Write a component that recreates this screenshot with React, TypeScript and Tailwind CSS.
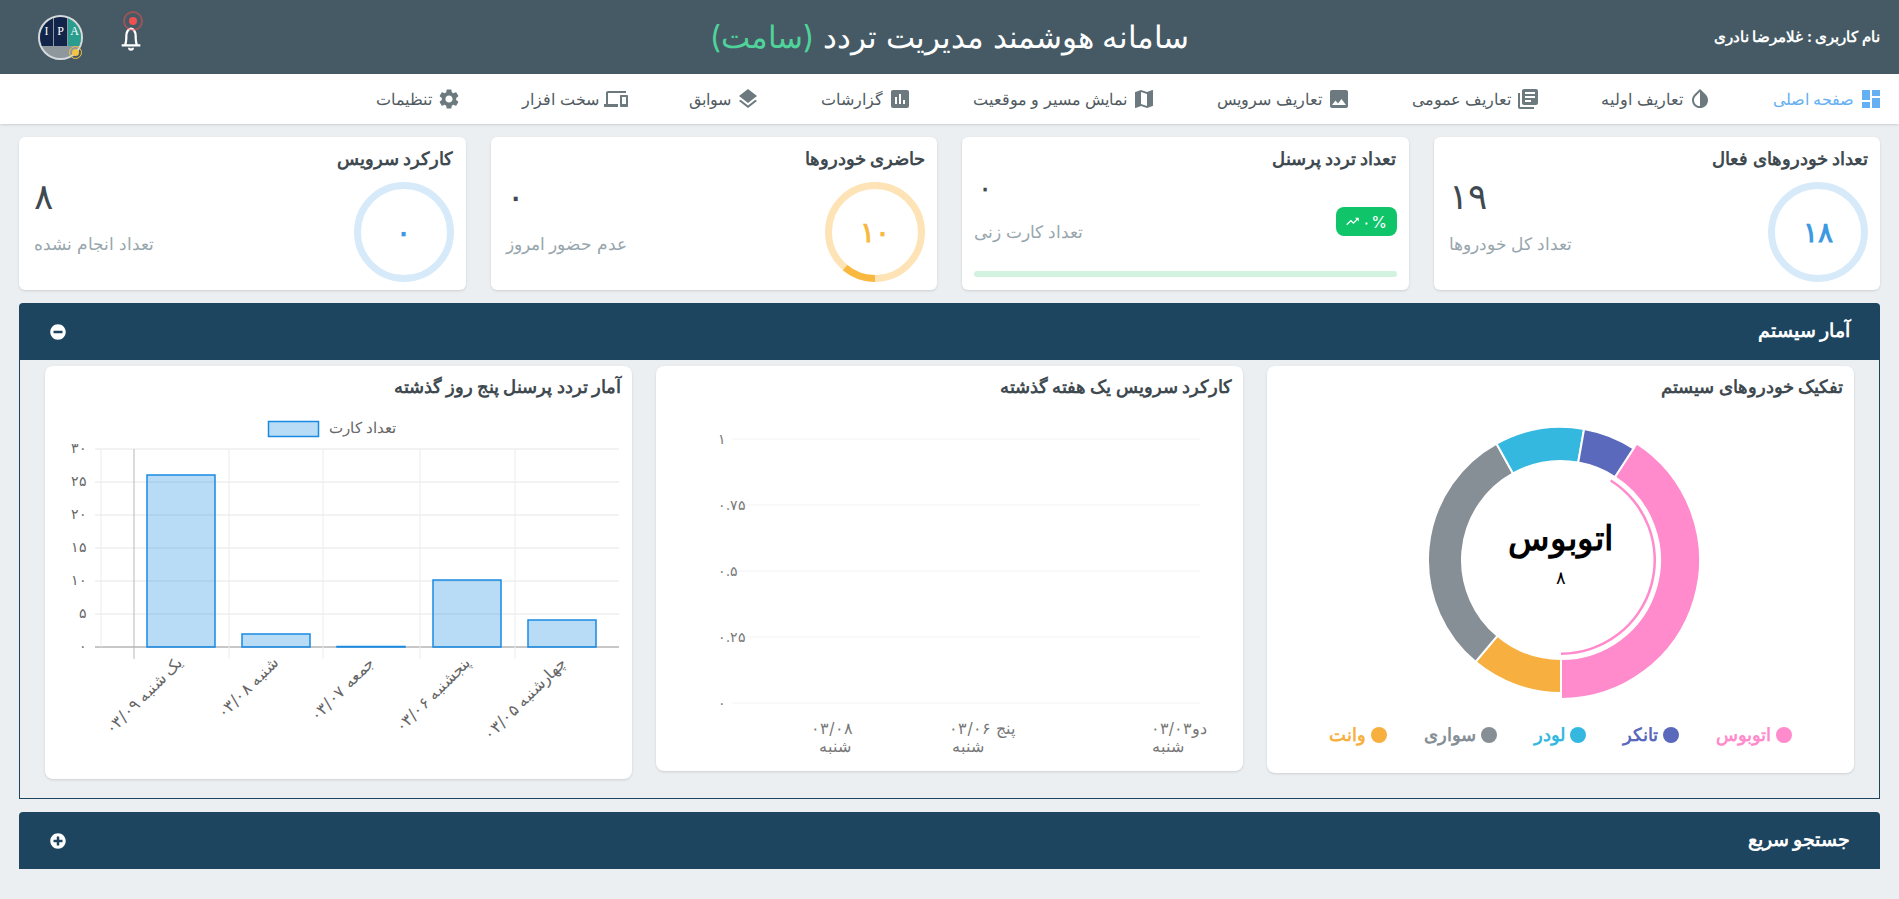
import {
  MdDashboard,
  MdInvertColors,
  MdLibraryBooks,
  MdImage,
  MdMap,
  MdInsertChart,
  MdLayers,
  MdDevices,
  MdSettings,
  MdTrendingUp,
} from 'react-icons/md';
import { FaMinusCircle, FaPlusCircle } from 'react-icons/fa';

const navItems = [
  { label: 'صفحه اصلی', Icon: MdDashboard, active: true },
  { label: 'تعاریف اولیه', Icon: MdInvertColors },
  { label: 'تعاریف عمومی', Icon: MdLibraryBooks },
  { label: 'تعاریف سرویس', Icon: MdImage },
  { label: 'نمایش مسیر و موقعیت', Icon: MdMap },
  { label: 'گزارشات', Icon: MdInsertChart },
  { label: 'سوابق', Icon: MdLayers },
  { label: 'سخت افزار', Icon: MdDevices },
  { label: 'تنظیمات', Icon: MdSettings },
];

function Ring({ value, color, track, arc }: { value: string; color: string; track: string; arc?: boolean }) {
  return (
    <div className="relative w-[100px] h-[100px] shrink-0">
      <svg viewBox="0 0 100 100" className="w-full h-full">
        <circle cx="50" cy="50" r="46.5" fill="none" stroke={track} strokeWidth="7" />
        {arc && <path d="M50 96.5A46.5 46.5 0 0 1 20.1 85.6" fill="none" stroke={color} strokeWidth="7" />}
      </svg>
      <div className="absolute inset-0 flex items-center justify-center text-[28px] font-bold tracking-[2px]" style={{ color }}>
        {value}
      </div>
    </div>
  );
}

function StatCard({ title, ring, value, label }: { title: string; ring: React.ReactNode; value: string; label: string }) {
  return (
    <div className="bg-white rounded-md shadow-sm h-[153px] pt-3 px-3">
      <h3 className="text-[18px] font-bold text-[#3f4a50] leading-[20px]">{title}</h3>
      <div className="flex items-start justify-between mt-[13px]">
        {ring}
        <div className="text-left w-[170px] pl-[3px]">
          <div className="text-[36px] leading-[42px] tracking-[4px] text-[#3f4a50] mt-[-7px]">{value}</div>
          <div className="text-[17px] leading-[20px] text-[#98a6ad] mt-[17px]">{label}</div>
        </div>
      </div>
    </div>
  );
}

function TrafficCard() {
  return (
    <div className="bg-white rounded-md shadow-sm h-[153px] pt-3 px-3">
      <h3 className="text-[18px] font-bold text-[#3f4a50] leading-[20px]">تعداد تردد پرسنل</h3>
      <div className="flex items-start justify-between">
        <div dir="ltr" className="mt-[38px] w-[61px] h-[29px] rounded-lg bg-[#10c469] text-white text-[16px] flex items-center justify-center gap-[2px]">
          <MdTrendingUp className="w-[15px] h-[15px]" />
          <span>۰%</span>
        </div>
        <div className="text-left">
          <div className="text-[30px] leading-[36px] text-[#3f4a50] pl-[3px]">۰</div>
          <div className="text-[17px] leading-[20px] text-[#98a6ad] mt-[17px]">تعداد کارت زنی</div>
        </div>
      </div>
      <div className="h-[6px] rounded bg-[#d1f3e0] mt-[29px]" />
    </div>
  );
}

function SectionHeader({ title, open }: { title: string; open?: boolean }) {
  return (
    <div className="bg-[#1d455f] h-[57px] rounded-t flex items-center justify-between pr-[30px] pl-[31px] text-white">
      <span className="text-[19px] font-bold">{title}</span>
      {open ? <FaMinusCircle className="w-4 h-4" /> : <FaPlusCircle className="w-4 h-4" />}
    </div>
  );
}

const slices = [
  { name: 'اتوبوس', color: '#ff8acc' },
  { name: 'تانکر', color: '#5b69bc' },
  { name: 'لودر', color: '#35b8e0' },
  { name: 'سواری', color: '#868e96' },
  { name: 'وانت', color: '#f7b03f' },
];

function polar(r: number, deg: number) {
  const a = (deg * Math.PI) / 180;
  return [140 + r * Math.sin(a), 140 - r * Math.cos(a)];
}

function arc(r0: number, r1: number, a0: number, a1: number) {
  const [x0, y0] = polar(r1, a0);
  const [x1, y1] = polar(r1, a1);
  const [x2, y2] = polar(r0, a1);
  const [x3, y3] = polar(r0, a0);
  const large = a1 - a0 > 180 ? 1 : 0;
  return `M${x0} ${y0}A${r1} ${r1} 0 ${large} 1 ${x1} ${y1}L${x2} ${y2}A${r0} ${r0} 0 ${large} 0 ${x3} ${y3}Z`;
}

function Donut() {
  return (
    <div className="relative w-[280px] h-[280px] mx-auto">
      <svg viewBox="0 0 280 280" className="w-full h-full">
        <path d={arc(99, 139, 33, 180)} fill="#ff8acc" stroke="#fff" strokeWidth="2" />
        <path d={arc(99, 133, 180, 220)} fill="#f7b03f" stroke="#fff" strokeWidth="2" />
        <path d={arc(99, 133, 220, 331)} fill="#868e96" stroke="#fff" strokeWidth="2" />
        <path d={arc(99, 133, 331, 370)} fill="#35b8e0" stroke="#fff" strokeWidth="2" />
        <path d={arc(99, 133, 10, 33)} fill="#5b69bc" stroke="#fff" strokeWidth="2" />
        <path d={arc(92.5, 95, 32, 180)} fill="#ff8acc" />
      </svg>
      <div className="absolute inset-0 flex flex-col items-center justify-center text-black">
        <span className="text-[34px] font-bold leading-[40px] mt-[-12px]">اتوبوس</span>
        <span className="text-[18px] mt-[6px]">۸</span>
      </div>
    </div>
  );
}

function BarChart() {
  const bars = [
    { x: 147, top: 475 },
    { x: 242, top: 634 },
    { x: 337, top: 646.5 },
    { x: 433, top: 580 },
    { x: 528, top: 620 },
  ];
  const yTicks = ['۰', '۵', '۱۰', '۱۵', '۲۰', '۲۵', '۳۰'];
  const xLabels = ['یک شنبه ۰۳/۰۹', 'شنبه ۰۳/۰۸', 'جمعه ۰۳/۰۷', 'پنجشنبه ۰۳/۰۶', 'چهارشنبه ۰۳/۰۵'];
  const vLines = [101, 134, 229, 323, 420, 515];
  return (
    <svg viewBox="45 410 587 369" className="w-[587px] h-[369px]">
      <rect x="268.5" y="421.5" width="50" height="15" fill="#188ae2" fillOpacity="0.3" stroke="#188ae2" strokeWidth="1.5" />
      <text x="396" y="433" fontSize="15" fill="#666" textAnchor="start">تعداد کارت</text>
      {yTicks.map((t, i) => {
        const y = 647 - i * 33;
        return (
          <g key={t}>
            <line x1="95" x2="619" y1={y} y2={y} stroke={i === 0 ? '#b5b5b5' : '#e6e6e6'} strokeWidth={i === 0 ? 1.5 : 1} />
            <text x="87" y={y + 4} textAnchor="start" fontSize="14" fill="#666">{t}</text>
          </g>
        );
      })}
      {vLines.map((x, i) => (
        <line key={x} x1={x} x2={x} y1="449" y2={i === 0 ? 647 : 659} stroke={i === 1 ? '#b8b8b8' : '#ececec'} />
      ))}
      {bars.map((b) => (
        <rect key={b.x} x={b.x} y={b.top} width="68" height={647 - b.top} fill="#188ae2" fillOpacity="0.3" stroke="#188ae2" strokeWidth="1.5" />
      ))}
      {xLabels.map((l, i) => {
        const x = 183 + i * 96;
        return (
          <text key={l} x={x} y="664" fontSize="16" fill="#666" textAnchor="start" transform={`rotate(-45 ${x} 664)`}>{l}</text>
        );
      })}
    </svg>
  );
}

function LineChart() {
  const ticks = ['۱', '۰.۷۵', '۰.۵', '۰.۲۵', '۰'];
  const labelClass = { fontSize: 16, fill: '#777', textAnchor: 'middle' as const };
  return (
    <svg viewBox="656 410 587 361" className="w-[587px] h-[361px]">
      {ticks.map((t, i) => {
        const y = 439 + i * 66;
        return (
          <g key={t}>
            <line x1="732" x2="1200" y1={y} y2={y} stroke="#f1f3f5" />
            <text x="718" y={y + 5} fontSize="14" fill="#777" textAnchor="end">{t}</text>
          </g>
        );
      })}
      <text x="832" y="734" {...labelClass}>۰۳/۰۸</text>
      <text x="835" y="752" {...labelClass}>شنبه</text>
      <text x="982" y="734" {...labelClass}>پنج ۰۳/۰۶</text>
      <text x="968" y="752" {...labelClass}>شنبه</text>
      <text x="1179" y="734" {...labelClass}>دو۰۳/۰۳</text>
      <text x="1168" y="752" {...labelClass}>شنبه</text>
    </svg>
  );
}

export default function App() {
  return (
    <div dir="rtl" className="min-h-[899px] bg-[#ebeff2] font-['Inter',system-ui,sans-serif]">
      {/* نوار بالا */}
      <header className="relative h-[74px] bg-[#455a64] flex items-center justify-between pr-[19px] pl-[38px] text-white">
        <span className="text-[15px] font-bold">نام کاربری : غلامرضا نادری</span>
        <h1 className="absolute inset-x-0 text-center text-[31px] pointer-events-none">
          سامانه هوشمند مدیریت تردد <span className="text-[#4fd39a]">(سامت)</span>
        </h1>
        <div className="flex items-center gap-[38px]">
          <div className="relative w-[22px] h-[30px] mt-[-6px]">
            <svg viewBox="0 0 24 30" className="w-[24px] h-[28px] mt-[4px] -ml-[1px]" fill="none" stroke="white" strokeWidth="2.4">
              <path d="M2 24h20M5.5 24c1.5-3 1.5-6 1.5-10s2-8 5-8 5 4 5 8 0 7 1.5 10M10 26.5a2 2 0 0 0 4 0" />
            </svg>
            <span className="absolute left-[2px] top-[-8px] w-[20px] h-[20px] rounded-full border-[2px] border-[#f05050]/50" />
            <span className="absolute left-[8px] top-[-2px] w-[8px] h-[8px] rounded-full bg-[#f05050]" />
          </div>
          <div className="relative w-[45px] h-[45px]">
            <div className="w-full h-full rounded-full border-2 border-[#d5dadd] overflow-hidden bg-[#8d979c] flex flex-col">
              <div dir="ltr" className="h-[29px] flex justify-center gap-px font-['Liberation_Serif',serif] text-[12px] leading-[29px] text-white">
                <span className="w-[13px] text-center bg-[#13244a]">I</span>
                <span className="w-[13px] text-center bg-[#13244a]">P</span>
                <span className="w-[13px] text-center bg-[#2a9d8f]">A</span>
              </div>
            </div>
            <span className="absolute left-[31px] top-[31px] w-[13px] h-[13px] rounded-full border border-[#f5c242] flex items-center justify-center">
              <span className="w-[7px] h-[7px] rounded-full bg-[#f5c242]" />
            </span>
          </div>
        </div>
      </header>

      {/* منو */}
      <nav className="h-[50px] bg-white shadow-sm flex items-center gap-[61px] pr-[16px]">
        {navItems.map(({ label, Icon, active }) => (
          <a key={label} className={`flex items-center gap-[5px] text-[16px] ${active ? 'text-[#64b0f2]' : 'text-[#505a5f]'}`}>
            <Icon className={`w-6 h-6 ${active ? '' : 'text-[#6c7a80]'}`} />
            {label}
          </a>
        ))}
      </nav>

      <main className="px-[19px] pt-[13px]">
        <div className="grid grid-cols-4 gap-[25px]">
          <StatCard title="تعداد خودروهای فعال" ring={<Ring value="۱۸" color="#3d9ae0" track="#d7eafa" />} value="۱۹" label="تعداد کل خودروها" />
          <TrafficCard />
          <StatCard title="حاضری خودروها" ring={<Ring value="۱۰" color="#f9b83f" track="#fde3b5" arc />} value="۰" label="عدم حضور امروز" />
          <StatCard title="کارکرد سرویس" ring={<Ring value="۰" color="#3d9ae0" track="#d7eafa" />} value="۸" label="تعداد انجام نشده" />
        </div>

        <section className="mt-[13px]">
          <SectionHeader title="آمار سیستم" open />
          <div className="border border-t-0 border-[#1d455f] h-[439px] grid grid-cols-3 gap-[24px] px-[25px] items-start pt-[6px]">
            <div className="bg-white rounded-lg shadow-sm h-[407px] pt-[7px] px-[11px]">
              <h3 className="text-[18px] font-bold text-[#3f4a50] h-[47px]">تفکیک خودروهای سیستم</h3>
              <Donut />
              <div className="flex justify-center gap-[37px] mt-[23px] text-[18px] leading-[24px] font-bold">
                {slices.map((s) => (
                  <span key={s.name} className="flex items-center gap-[5px]" style={{ color: s.color }}>
                    <span className="w-[16px] h-[16px] rounded-full" style={{ background: s.color }} />
                    {s.name}
                  </span>
                ))}
              </div>
            </div>
            <div className="bg-white rounded-lg shadow-sm h-[405px] pt-[7px]">
              <h3 className="text-[18px] font-bold text-[#3f4a50] px-[11px] h-[37px]">کارکرد سرویس یک هفته گذشته</h3>
              <LineChart />
            </div>
            <div className="bg-white rounded-lg shadow-sm h-[413px] pt-[7px]">
              <h3 className="text-[18px] font-bold text-[#3f4a50] px-[11px] h-[37px]">آمار تردد پرسنل پنج روز گذشته</h3>
              <BarChart />
            </div>
          </div>
        </section>

        <section className="mt-[13px]">
          <SectionHeader title="جستجو سریع" />
        </section>
      </main>
    </div>
  );
}
